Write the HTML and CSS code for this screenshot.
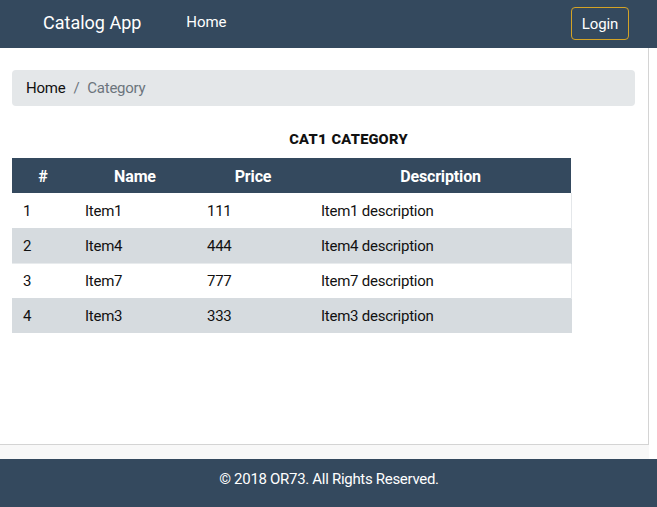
FILE: index.html
```html
<!DOCTYPE html>
<html>
<head>
<meta charset="utf-8">
<link rel="stylesheet" href="styles.css">
</head>
<body>
<header class="navbar">
  <a class="brand">Catalog App</a>
  <a class="nav-link">Home</a>
  <span class="spacer"></span>
  <button class="login">Login</button>
</header>
<main class="page">
  <nav class="breadcrumb">
    <span class="crumb">Home</span>
    <span class="sep">/</span>
    <span class="crumb active">Category</span>
  </nav>
  <h2 class="title">Cat1 Category</h2>
  <table class="items">
    <colgroup>
      <col class="c1"><col class="c2"><col class="c3"><col class="c4">
    </colgroup>
    <thead>
      <tr><th>#</th><th>Name</th><th>Price</th><th>Description</th></tr>
    </thead>
    <tbody>
      <tr><td>1</td><td>Item1</td><td>111</td><td>Item1 description</td></tr>
      <tr class="odd"><td>2</td><td>Item4</td><td>444</td><td>Item4 description</td></tr>
      <tr><td>3</td><td>Item7</td><td>777</td><td>Item7 description</td></tr>
      <tr class="odd"><td>4</td><td>Item3</td><td>333</td><td>Item3 description</td></tr>
    </tbody>
  </table>
</main>
<div class="strip"></div>
<footer class="footer">© 2018 OR73. All Rights Reserved.</footer>
</body>
</html>
```
FILE: styles.css
```css
* { box-sizing: border-box; }
html, body { margin: 0; padding: 0; }
body {
  font-family: Roboto, "Liberation Sans", sans-serif;
  font-size: 15px;
  letter-spacing: -0.25px;
  color: #212529;
  background: #fff;
  width: 657px;
  height: 507px;
  overflow: hidden;
}
.navbar {
  height: 48px;
  background: #34495e;
  display: flex;
  align-items: center;
  padding: 0 28px 0 43px;
  color: #fff;
}
.brand {
  font-size: 18px;
  letter-spacing: 0;
  line-height: 24px;
  margin-top: -2px;
}
.nav-link {
  font-size: 15px;
  letter-spacing: -0.1px;
  margin-left: 45px;
  margin-top: -4px;
}
.spacer { flex: 1; }
.login {
  font-family: inherit;
  font-size: 15px;
  letter-spacing: -0.1px;
  color: #fff;
  background: transparent;
  border: 1px solid #d4a326;
  border-radius: 4px;
  width: 58px;
  height: 33px;
  padding: 0;
  margin-top: -1px;
}
.page {
  width: 649px;
  height: 397px;
  border-right: 1px solid #d4d4d4;
  border-bottom: 1px solid #d4d4d4;
  padding: 22px 13px 0 12px;
}
.breadcrumb {
  height: 36px;
  background: #e4e7e9;
  border-radius: 4px;
  display: flex;
  align-items: center;
  padding: 0 14px;
  color: #111;
}
.sep { color: #6c757d; margin: 0 8px 0 8px; }
.crumb.active { color: #6c757d; }
.title {
  margin: 23px 0 10px;
  padding-left: 50px;
  text-align: center;
  font-size: 17px;
  line-height: 19px;
  font-weight: 700;
  font-variant: all-small-caps;
  font-variant-numeric: normal;
  color: #111;
  letter-spacing: 0.2px;
}
.items {
  width: 559px;
  border-collapse: collapse;
  table-layout: fixed;
}
.c1 { width: 62px; }
.c2 { width: 122px; }
.c3 { width: 114px; }
.c4 { width: 261px; }
.items th {
  background: #34495e;
  color: #fff;
  font-size: 16px;
  letter-spacing: -0.15px;
  font-weight: 700;
  height: 35px;
  padding: 2px 11px 0;
  text-align: center;
}
.items td {
  height: 35px;
  padding: 1px 11px 0;
  color: #111;
  border-top: 1px solid #e8ebed;
}
.items tbody tr { background: #fff; }
.items tbody tr:first-child td { border-top: none; }
.items tbody td:last-child { border-right: 1px solid #e4e7ea; }
.items tbody tr.odd { background: #d6dbdf; }
.items tbody tr.odd td { border-color: #d6dbdf; }
.strip {
  height: 14px;
  width: 649px;
  background: #f8f8f8;
}
.footer {
  height: 48px;
  background: #34495e;
  color: #fff;
  display: flex;
  align-items: center;
  justify-content: center;
  padding-left: 1px;
  font-size: 15px;
  letter-spacing: -0.3px;
  padding-bottom: 8px;
}
```
